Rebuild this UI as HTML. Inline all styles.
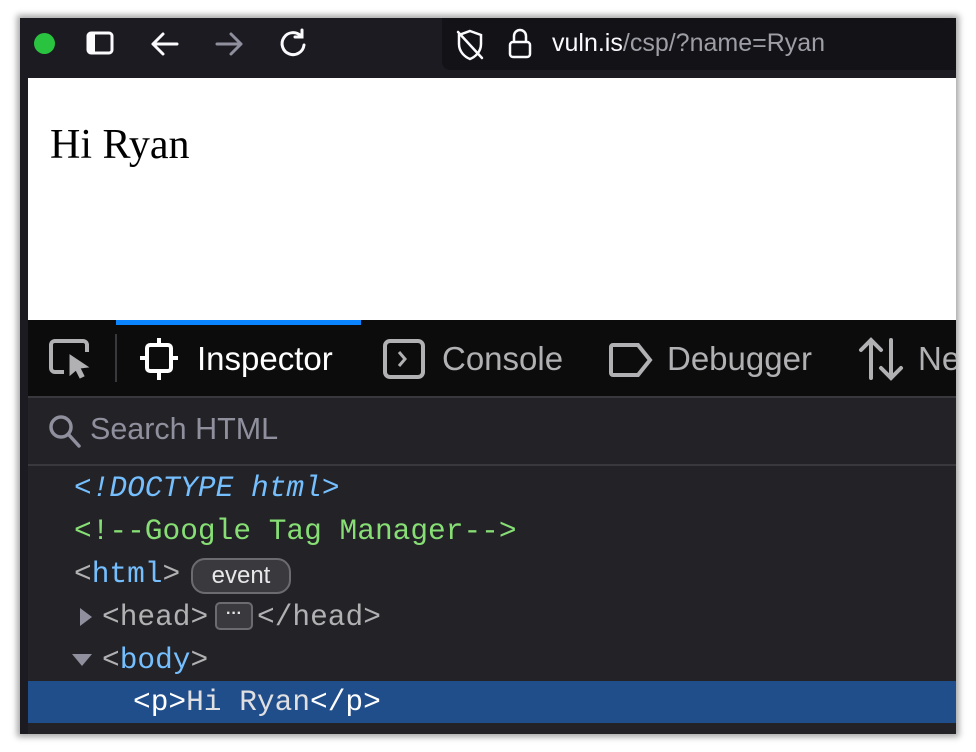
<!DOCTYPE html>
<html><head><style>
body{margin:0;width:976px;height:752px;background:#fff;position:relative;overflow:hidden;font-family:"Liberation Sans",sans-serif}
#win{position:absolute;left:20px;top:18px;width:936px;height:716px;background:#1c1b22;box-shadow:0 0 6px 3px rgba(0,0,0,.35);overflow:hidden}
#tb{position:absolute;left:0;top:0;width:936px;height:60px;background:#1c1b22}
#url{position:absolute;left:422px;top:0;width:514px;height:52px;background:#131217;border-radius:0 0 0 8px}
#page{position:absolute;left:8px;top:60px;width:928px;height:242px;background:#fff}
#page p{margin:0;position:absolute;left:22px;top:43px;font:42px "Liberation Serif",serif;color:#000}
#dt{position:absolute;left:8px;top:302px;width:928px;height:414px;background:#232327}
#tabs{position:absolute;left:0;top:0;width:928px;height:76px;background:#0c0c0d;border-bottom:2px solid #38383d}
.tab{position:absolute;top:20px;font-size:33px;color:#b1b1b3}
#search{position:absolute;left:0;top:78px;width:928px;height:66px;border-bottom:2px solid #38383d}
.ln{position:absolute;font:29.5px "Liberation Mono",monospace;color:#b1b1b3;white-space:pre;height:43px;line-height:43px}
.b{color:#75bfff}.g{color:#86de74}
</style></head><body>
<div id="win">
<div id="tb">
<div style="position:absolute;left:14px;top:15px;width:21px;height:21px;border-radius:50%;background:#2ac340"></div>
<svg style="position:absolute;left:66px;top:12px" width="30" height="28"><rect x="2" y="3" width="24" height="20" rx="3" fill="none" stroke="#fbfbfe" stroke-width="3"/><rect x="2" y="3" width="7" height="20" fill="#fbfbfe"/></svg>
<svg style="position:absolute;left:128px;top:10px" width="34" height="32" fill="none" stroke="#fbfbfe" stroke-width="3" stroke-linecap="round"><path d="M5 16H29M5 16L15 6M5 16L15 26"/></svg>
<svg style="position:absolute;left:192px;top:10px" width="34" height="32" fill="none" stroke="#8f8f9d" stroke-width="3" stroke-linecap="round"><path d="M5 16H29M29 16L19 6M29 16L19 26"/></svg>
<svg style="position:absolute;left:256px;top:9px" width="34" height="34" fill="none" stroke="#fbfbfe" stroke-width="3" stroke-linecap="round"><path d="M25 9A11 11 0 1 0 28 18"/><path d="M26 3V10H19"/></svg>
<div id="url">
<svg style="position:absolute;left:12px;top:10px" width="32" height="34" fill="none" stroke="#fbfbfe" stroke-width="2.5" stroke-linecap="round"><path d="M16 3L27 7V16C27 24 21 29 16 31C11 29 5 24 5 16V7Z"/><path d="M4 4L28 30"/></svg>
<svg style="position:absolute;left:64px;top:8px" width="28" height="36" fill="none" stroke="#fbfbfe" stroke-width="2.5"><path d="M8 16V10A6 6 0 0 1 20 10V16"/><rect x="4" y="16" width="20" height="15" rx="3"/></svg>
<div style="position:absolute;left:110px;top:11px;font-size:25px;color:#fbfbfe">vuln.is<span style="color:#9e9ea6">/csp/?name=Ryan</span></div>
</div>
</div>
<div id="page"><p>Hi Ryan</p></div>
<div id="dt">
<div id="tabs">
<div style="position:absolute;left:88px;top:0;width:245px;height:5px;background:#0a84ff"></div>
<svg style="position:absolute;left:20px;top:18px" width="48" height="42" fill="none" stroke="#b1b1b3" stroke-width="4"><path d="M16 34H7a4 4 0 0 1-4-4V7a4 4 0 0 1 4-4H35a4 4 0 0 1 4 4V14"/><path d="M22 17L40 29L32 30L36 38L32 40L28 32L22 37Z" fill="#b1b1b3" stroke-width="1"/></svg>
<div style="position:absolute;left:87px;top:14px;width:2px;height:48px;background:#38383d"></div>
<svg style="position:absolute;left:110px;top:16px" width="42" height="46" fill="none" stroke="#fff" stroke-width="4"><rect x="9" y="9" width="24" height="26" rx="3"/><path d="M21 2V9M21 35V44M2 22H9M33 22H40"/></svg>
<div class="tab" style="left:169px;color:#fff">Inspector</div>
<svg style="position:absolute;left:354px;top:18px" width="46" height="44" fill="none" stroke="#b1b1b3" stroke-width="4"><rect x="3" y="3" width="38" height="36" rx="5"/><path d="M17 14L23 21L17 28" stroke-width="3"/></svg>
<div class="tab" style="left:414px">Console</div>
<svg style="position:absolute;left:580px;top:22px" width="46" height="36" fill="none" stroke="#b1b1b3" stroke-width="4"><path d="M5 3H30L42 18L30 33H5a2 2 0 0 1-2-2V5a2 2 0 0 1 2-2Z"/></svg>
<div class="tab" style="left:639px">Debugger</div>
<svg style="position:absolute;left:830px;top:16px" width="46" height="46" fill="none" stroke="#b1b1b3" stroke-width="4" stroke-linecap="round"><path d="M13 42V4M3 14L13 4L23 14M33 4V42M23 32L33 42L43 32"/></svg>
<div class="tab" style="left:890px">Ne</div>
</div>
<div id="search">
<svg style="position:absolute;left:20px;top:16px" width="34" height="36" fill="none" stroke="#8f8f9d" stroke-width="3.5" stroke-linecap="round"><circle cx="13" cy="13" r="10"/><path d="M21 21L31 32"/></svg>
<div style="position:absolute;left:62px;top:14px;font-size:30.5px;color:#8f8f9d">Search HTML</div>
</div>
<div class="ln b" style="left:46px;top:147px;font-style:italic">&lt;!DOCTYPE html&gt;</div>
<div class="ln g" style="left:46px;top:190px">&lt;!--Google Tag Manager--&gt;</div>
<div class="ln" style="left:46px;top:233px">&lt;<span class="b">html</span>&gt;</div>
<div style="position:absolute;left:163px;top:238px;width:96px;height:32px;border:2px solid #6b6b70;border-radius:14px;background:#3a3a3e;color:#e8e8ea;font:24px 'Liberation Sans',sans-serif;text-align:center;line-height:32px">event</div>
<div style="position:absolute;left:52px;top:288px;width:0;height:0;border-left:12px solid #8f8f9d;border-top:9px solid transparent;border-bottom:9px solid transparent"></div>
<div class="ln" style="left:74px;top:276px">&lt;head&gt;</div>
<div style="position:absolute;left:187px;top:282px;width:34px;height:24px;border:2px solid #6b6b70;border-radius:5px;background:#3a3a3e;color:#e8e8ea;font:bold 16px sans-serif;text-align:center;line-height:20px">···</div>
<div class="ln" style="left:229px;top:276px">&lt;/head&gt;</div>
<div style="position:absolute;left:44px;top:334px;width:0;height:0;border-top:12px solid #8f8f9d;border-left:10px solid transparent;border-right:10px solid transparent"></div>
<div class="ln" style="left:74px;top:319px">&lt;<span class="b">body</span>&gt;</div>
<div style="position:absolute;left:0;top:361px;width:928px;height:42px;background:#204e8a"></div>
<div class="ln" style="left:105px;top:361px;color:#fff">&lt;p&gt;<span style="color:#e0e0e2">Hi Ryan</span>&lt;/p&gt;</div>
</div>
</div>
</body></html>
